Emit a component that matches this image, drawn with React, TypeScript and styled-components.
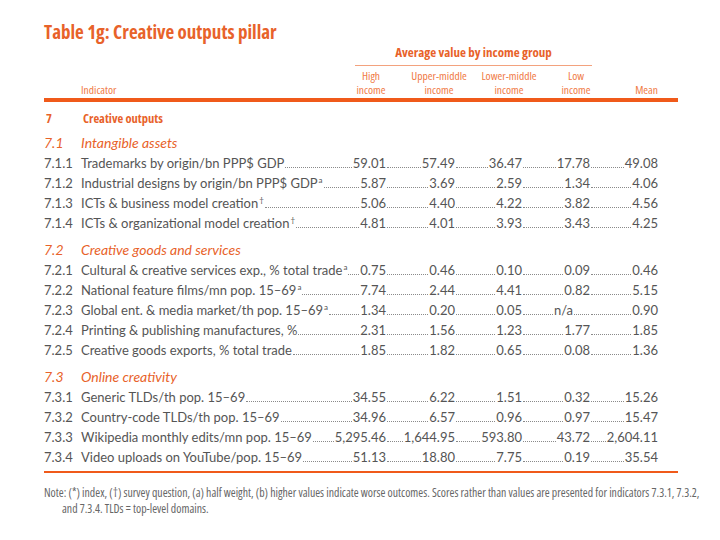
import React from "react";
import styled, { createGlobalStyle } from "styled-components";

const Global = createGlobalStyle`
  html, body { margin: 0; padding: 0; background: #ffffff; }
  body { font-family: Lato, "Open Sans", sans-serif; color: #555; }
`;

const COND = `"Open Sans", sans-serif`;
const ORANGE = "#e8622a";
const LIGHT = "#f07a45";
const COLS = "37px 305px 69px 67px 68px 68px";

const Page = styled.div`
  padding: 20px 0 0 44px;
  width: 634px;
`;

const Title = styled.h1`
  margin: 0;
  font-family: ${COND};
  font-stretch: 75%;
  font-weight: 700;
  font-size: 19px;
  line-height: 25px;
  color: ${ORANGE};
  white-space: nowrap;
`;

const Head = styled.div`
  display: grid;
  grid-template-columns: 296px 62px 74px 66px 68px 48px;
  grid-template-rows: 21px 32px;
  width: 614px;
`;

const GroupTitle = styled.div`
  grid-column: 2 / 6;
  grid-row: 1;
  margin: 0 18px 0 15px;
  border-bottom: 1px solid #f3a27e;
  text-align: center;
  font-family: ${COND};
  font-stretch: 75%;
  font-weight: 700;
  font-size: 13px;
  line-height: 15px;
  color: ${ORANGE};
  white-space: nowrap;
`;

const ColHead = styled.div<{ $align?: string }>`
  grid-row: 2;
  align-self: end;
  text-align: ${(p) => p.$align || "center"};
  font-family: ${COND};
  font-stretch: 75%;
  font-size: 11.5px;
  line-height: 14px;
  color: ${LIGHT};
  padding-bottom: 1px;
  white-space: nowrap;
`;

const IndicatorHead = styled(ColHead)`
  padding-left: 37px;
`;

const ThickRule = styled.div<{ $h: number; $gap?: number }>`
  height: ${(p) => p.$h}px;
  margin-top: ${(p) => p.$gap ?? 0}px;
  background: #f05a1a;
`;

const PillarRow = styled.div`
  display: grid;
  grid-template-columns: 37px 1fr;
  margin-top: 5px;
  height: 22px;
  align-items: center;
  font-family: ${COND};
  font-stretch: 75%;
  font-weight: 700;
  font-size: 12.5px;
  color: ${ORANGE};
  padding-left: 2px;
`;

const SubPillarHead = styled.div<{ $first?: boolean }>`
  display: grid;
  grid-template-columns: 37px 1fr;
  height: 22px;
  margin-top: ${(p) => (p.$first ? 2 : 5)}px;
  align-items: center;
  font-style: italic;
  font-size: 14px;
  color: ${ORANGE};
`;

const DataRow = styled.div`
  display: grid;
  grid-template-columns: ${COLS};
  height: 20px;
  align-items: center;
  font-size: 13px;
  color: #555;
  width: 614px;
`;

const Cell = styled.div`
  display: flex;
  align-items: baseline;
  white-space: nowrap;
  min-width: 0;
`;

const Leader = styled.span<{ $grow?: number }>`
  flex: ${(p) => p.$grow ?? 1} 1 0;
  min-width: 3px;
  height: 1px;
  margin: 0 1px;
  border-bottom: 1px dotted #8a8a8a;
`;

const Sup = styled.sup`
  font-size: 8px;
  line-height: 0;
  vertical-align: 5px;
  margin-left: 1px;
`;

const Note = styled.div`
  margin-top: 11px;
  font-family: ${COND};
  font-stretch: 84%;
  font-size: 11.8px;
  line-height: 16px;
  color: #666;
  padding-left: 18px;
  text-indent: -18px;
  width: 652px;
`;

type Row = [string, string, string, string[]];
type Section = { num: string; title: string; rows: Row[] };

const sections: Section[] = [
  {
    num: "7.1",
    title: "Intangible assets",
    rows: [
      ["7.1.1", "Trademarks by origin/bn PPP$ GDP", "", ["59.01", "57.49", "36.47", "17.78", "49.08"]],
      ["7.1.2", "Industrial designs by origin/bn PPP$ GDP", "a", ["5.87", "3.69", "2.59", "1.34", "4.06"]],
      ["7.1.3", "ICTs & business model creation", "†", ["5.06", "4.40", "4.22", "3.82", "4.56"]],
      ["7.1.4", "ICTs & organizational model creation", "†", ["4.81", "4.01", "3.93", "3.43", "4.25"]],
    ],
  },
  {
    num: "7.2",
    title: "Creative goods and services",
    rows: [
      ["7.2.1", "Cultural & creative services exp., % total trade", "a", ["0.75", "0.46", "0.10", "0.09", "0.46"]],
      ["7.2.2", "National feature films/mn pop. 15–69", "a", ["7.74", "2.44", "4.41", "0.82", "5.15"]],
      ["7.2.3", "Global ent. & media market/th pop. 15–69", "a", ["1.34", "0.20", "0.05", "n/a", "0.90"]],
      ["7.2.4", "Printing & publishing manufactures, %", "", ["2.31", "1.56", "1.23", "1.77", "1.85"]],
      ["7.2.5", "Creative goods exports, % total trade", "", ["1.85", "1.82", "0.65", "0.08", "1.36"]],
    ],
  },
  {
    num: "7.3",
    title: "Online creativity",
    rows: [
      ["7.3.1", "Generic TLDs/th pop. 15–69", "", ["34.55", "6.22", "1.51", "0.32", "15.26"]],
      ["7.3.2", "Country-code TLDs/th pop. 15–69", "", ["34.96", "6.57", "0.96", "0.97", "15.47"]],
      ["7.3.3", "Wikipedia monthly edits/mn pop. 15–69", "", ["5,295.46", "1,644.95", "593.80", "43.72", "2,604.11"]],
      ["7.3.4", "Video uploads on YouTube/pop. 15–69", "", ["51.13", "18.80", "7.75", "0.19", "35.54"]],
    ],
  },
];

function ValueCell({ v }: { v: string }) {
  if (v === "n/a") {
    return (
      <Cell>
        <Leader $grow={2} />
        <span>n/a</span>
        <Leader $grow={1} />
      </Cell>
    );
  }
  return (
    <Cell>
      <Leader />
      <span>{v}</span>
    </Cell>
  );
}

function DataLine({ row }: { row: Row }) {
  const [num, label, sup, vals] = row;
  const [first, ...rest] = vals;
  return (
    <DataRow>
      <span>{num}</span>
      <Cell>
        <span>
          {label}
          {sup && <Sup>{sup}</Sup>}
        </span>
        <Leader />
        <span>{first}</span>
      </Cell>
      {rest.map((v, i) => (
        <ValueCell key={i} v={v} />
      ))}
    </DataRow>
  );
}

export default function App() {
  return (
    <Page>
      <Global />
      <Title>Table 1g: Creative outputs pillar</Title>
      <Head>
        <GroupTitle>Average value by income group</GroupTitle>
        <IndicatorHead $align="left">Indicator</IndicatorHead>
        <ColHead>High<br />income</ColHead>
        <ColHead>Upper-middle<br />income</ColHead>
        <ColHead>Lower-middle<br />income</ColHead>
        <ColHead>Low<br />income</ColHead>
        <ColHead $align="right">Mean</ColHead>
      </Head>
      <ThickRule $h={4} />
      <PillarRow>
        <span>7</span>
        <span>Creative outputs</span>
      </PillarRow>
      {sections.map((s, i) => (
        <React.Fragment key={s.num}>
          <SubPillarHead $first={i === 0}>
            <span>{s.num}</span>
            <span>{s.title}</span>
          </SubPillarHead>
          {s.rows.map((r) => (
            <DataLine key={r[0]} row={r} />
          ))}
        </React.Fragment>
      ))}
      <ThickRule $h={2} $gap={4} />
      <Note>
        Note: (*) index, (†) survey question, (a) half weight, (b) higher values indicate worse outcomes. Scores rather than values are presented for indicators 7.3.1, 7.3.2, and 7.3.4. TLDs = top-level domains.
      </Note>
    </Page>
  );
}
